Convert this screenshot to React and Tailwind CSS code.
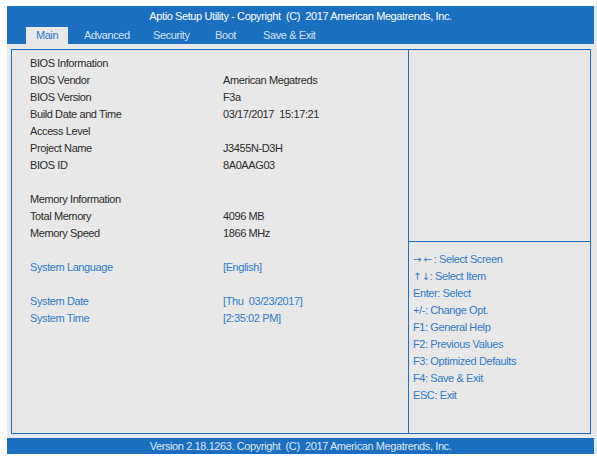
const infoRows = [
  { label: "BIOS Information", value: "" },
  { label: "BIOS Vendor", value: "American Megatreds" },
  { label: "BIOS Version", value: "F3a" },
  { label: "Build Date and Time", value: "03/17/2017\u00a0\u00a015:17:21" },
  { label: "Access Level", value: "" },
  { label: "Project Name", value: "J3455N-D3H" },
  { label: "BIOS ID", value: "8A0AAG03" },
  { spacer: true },
  { label: "Memory Information", value: "" },
  { label: "Total Memory", value: "4096 MB" },
  { label: "Memory Speed", value: "1866 MHz" },
  { spacer: true },
  { label: "System Language", value: "[English]", active: true },
  { spacer: true },
  { label: "System Date", value: "[Thu\u00a0\u00a003/23/2017]", active: true },
  { label: "System Time", value: "[2:35:02 PM]", active: true },
];

const helpRows = [
  { keys: "\u2192\u2190", text: ": Select Screen", track: "tracking-[2px]" },
  { keys: "\u2191\u2193", text: ": Select Item", track: "tracking-normal" },
  { keys: null, text: "Enter: Select" },
  { keys: null, text: "+/-: Change Opt." },
  { keys: null, text: "F1: General Help" },
  { keys: null, text: "F2: Previous Values" },
  { keys: null, text: "F3: Optimized Defaults" },
  { keys: null, text: "F4: Save & Exit" },
  { keys: null, text: "ESC: Exit" },
];

export default function App() {
  return (
    <div
      className="w-[597px] h-[463px] bg-white pt-[6px] pl-[7px] text-[11px] tracking-[-0.4px]"
      style={{ fontFamily: '"Liberation Sans", Arial, sans-serif' }}
    >
      <div className="w-[590px] flex flex-col border-r-[3px] border-[#e6e6e6]">
        {/* Cabecera */}
        <div className="h-[38px] bg-[#1a6fc0] flex flex-col">
          <div className="h-[21px] pt-[4px] text-center text-white leading-[13px]">
            Aptio Setup Utility - Copyright&nbsp;&nbsp;(C)&nbsp;&nbsp;2017 American Megatrends, Inc.
          </div>
          <div className="h-[17px] flex items-stretch text-[#d6e2f0] leading-[17px]">
            <div className="ml-[19px] w-[42px] bg-[#e8e8e8] text-[#2a78c8] text-center">
              Main
            </div>
            <div className="w-[85px] pl-[16px]">Advanced</div>
            <div className="w-[62px]">Security</div>
            <div className="w-[48px]">Boot</div>
            <div>Save &amp; Exit</div>
          </div>
        </div>

        {/* Cuerpo */}
        <div className="h-[394px] bg-[#e8e8e8] pt-[5px] pl-[4px] pr-[3px] pb-[4px]">
          <div className="h-full flex border border-[#1a6fc0]">
            <div className="w-[396px] pt-[5px] pl-[18px] leading-[17px] text-[#2b2b2b]">
              {infoRows.map((row, i) =>
                row.spacer ? (
                  <div key={i} className="h-[17px]" />
                ) : (
                  <div
                    key={i}
                    className={
                      "flex h-[17px] " + (row.active ? "text-[#2e7ac8]" : "")
                    }
                  >
                    <div className="w-[193px]">{row.label}</div>
                    <div>{row.value}</div>
                  </div>
                )
              )}
            </div>
            <div className="flex-1 flex flex-col border-l border-[#1a6fc0]">
              <div className="h-[192px] border-b border-[#1a6fc0]" />
              <div className="pt-[9px] pl-[4px] leading-[17px] text-[#2e7ac8]">
                {helpRows.map((h) => (
                  <div key={h.text} className="h-[17px]">
                    {h.keys && (
                      <span
                        className={"text-[10px] " + h.track}
                        style={{ fontFamily: '"DejaVu Sans", sans-serif' }}
                      >
                        {h.keys}
                      </span>
                    )}
                    {h.text}
                  </div>
                ))}
              </div>
            </div>
          </div>
        </div>

        {/* Pie */}
        <div className="h-[16px] bg-[#1a6fc0] text-center text-[#dfe8f3] leading-[16px]">
          Version 2.18.1263. Copyright&nbsp;&nbsp;(C)&nbsp;&nbsp;2017 American Megatrends, Inc.
        </div>
      </div>
    </div>
  );
}
